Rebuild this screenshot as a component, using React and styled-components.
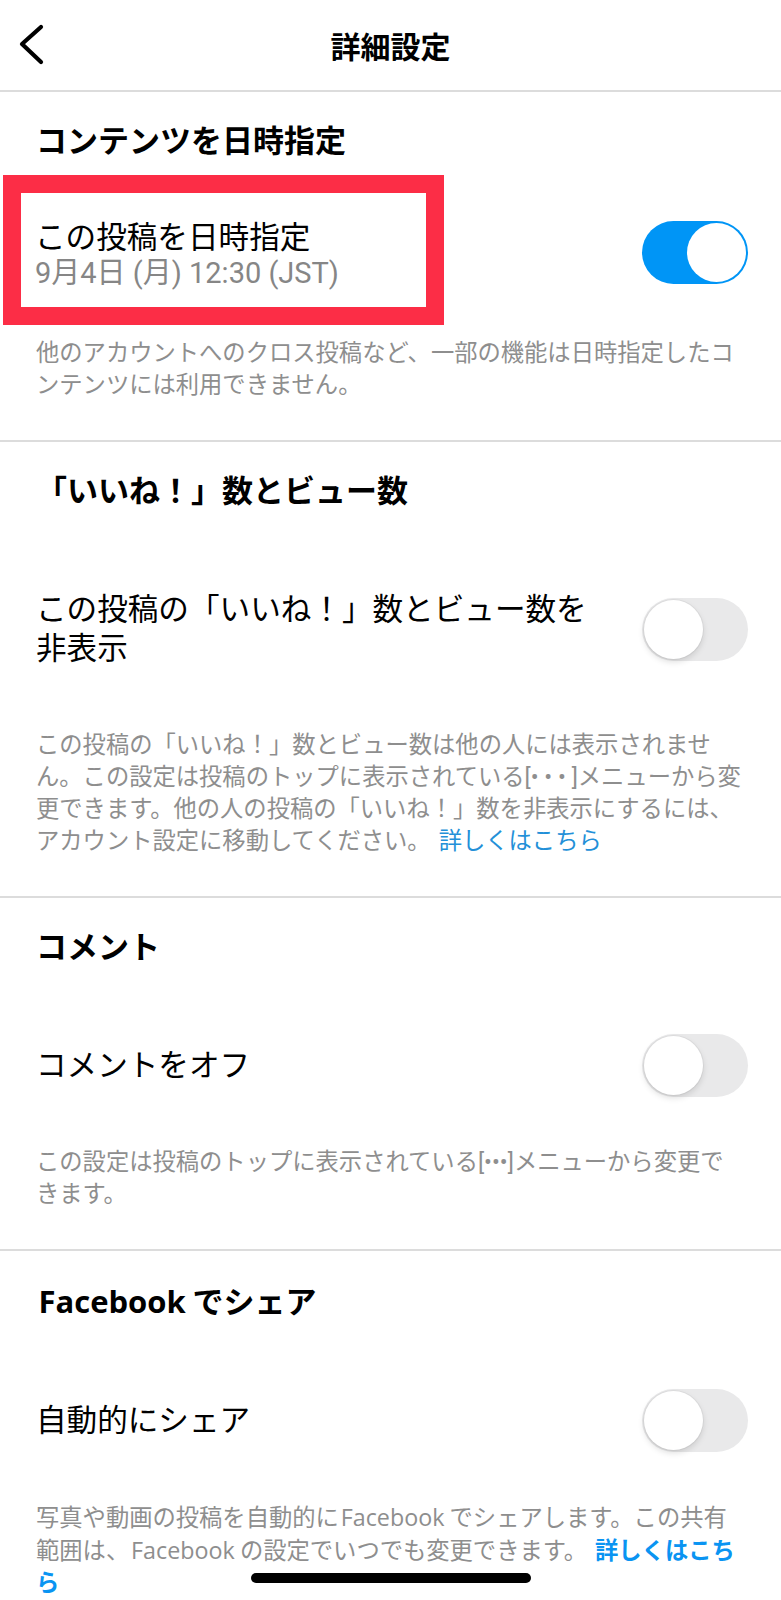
import React from 'react';
import styled, { createGlobalStyle } from 'styled-components';

const GlobalStyle = createGlobalStyle`
  html, body {
    margin: 0;
    background: #fff;
  }
  body {
    font-family: Roboto, "Noto Sans CJK JP", sans-serif;
    color: #000;
    -webkit-font-smoothing: antialiased;
  }
  * {
    box-sizing: border-box;
  }
`;

const Page = styled.div`
  width: 100%;
  min-height: 100vh;
  background: #fff;
`;

const Header = styled.header`
  display: grid;
  grid-template-columns: 90px 1fr 90px;
  align-items: center;
  height: 92px;
  border-bottom: 2px solid #dcdcdc;
`;

const BackButton = styled.button`
  display: flex;
  align-items: center;
  justify-content: flex-start;
  padding: 0 0 0 17px;
  margin: 0;
  border: none;
  background: none;
  height: 100%;
  cursor: pointer;
`;

const Title = styled.h1`
  margin: 0;
  padding-top: 5px;
  text-align: center;
  font-size: 30px;
  font-weight: 700;
  line-height: 40px;
`;

const Section = styled.section`
  padding: 30px 33px 39px 36px;
  border-bottom: ${({ $last }) => ($last ? 'none' : '2px solid #dcdcdc')};
`;

const Heading = styled.h2`
  margin: 0;
  font-size: 31px;
  font-weight: 700;
  line-height: 40px;
`;

const Latin = styled.span`
  font-family: "Open Sans", Roboto, sans-serif;
  margin: 0 0.22em 0 0.08em;
`;

const Row = styled.div`
  display: flex;
  align-items: center;
  justify-content: space-between;
  padding: ${({ $pad }) => $pad || '78px 0 61px'};
`;

const Label = styled.div`
  font-size: 30.6px;
  line-height: 39px;
  font-weight: 400;
  color: #000;
`;

const Highlight = styled.div`
  width: 441px;
  margin-left: -33px;
  padding: 26px 0 18px 14px;
  border: 18px solid #fc2d46;
  ${Label} {
    line-height: 38px;
  }
`;

const SubLabel = styled.div`
  font-size: 29px;
  line-height: 32px;
  color: #868686;
`;

const Track = styled.span`
  position: relative;
  flex: none;
  display: block;
  width: 106px;
  height: 63px;
  margin: ${({ $shift }) => ($shift ? '4px 0 0' : '-12px 0')};
  border-radius: 32px;
  background: ${({ $on }) => ($on ? '#0095f6' : '#e9e9ea')};
`;

const Knob = styled.span`
  position: absolute;
  top: 2px;
  left: ${({ $on }) => ($on ? '45px' : '2px')};
  width: 59px;
  height: 59px;
  border-radius: 50%;
  background: #fff;
  box-shadow: ${({ $on }) =>
    $on ? 'none' : '0 3px 6px rgba(0,0,0,0.13), 0 0 0 1px rgba(0,0,0,0.04)'};
`;

const Note = styled.div`
  font-size: 23.3px;
  line-height: 32px;
  color: #8e8e8e;
`;

const NoteLine = styled.div`
  white-space: nowrap;
`;

const MoreLink = styled.a`
  color: ${({ $strong }) => ($strong ? '#0a94f2' : '#2390d8')};
  font-weight: ${({ $strong }) => ($strong ? 700 : 400)};
  text-decoration: none;
  margin-left: ${({ $gap }) => ($gap ? '8px' : '0')};
`;

const HomeIndicator = styled.div`
  position: fixed;
  left: 50%;
  bottom: 17px;
  width: 280px;
  height: 10px;
  margin-left: -140px;
  border-radius: 5px;
  background: #000;
`;

const Toggle = ({ on, shift }) => (
  <Track $on={on} $shift={shift}>
    <Knob $on={on} />
  </Track>
);

const ChevronLeft = () => (
  <svg width="30" height="42" viewBox="0 0 30 42">
    <path
      d="M24 3 L5 20 L24 38"
      fill="none"
      stroke="#000"
      strokeWidth="4.2"
      strokeLinecap="round"
      strokeLinejoin="round"
    />
  </svg>
);

const App = () => (
  <Page>
    <GlobalStyle />
    <Header>
      <BackButton aria-label="戻る">
        <ChevronLeft />
      </BackButton>
      <Title>詳細設定</Title>
      <span />
    </Header>

    <Section>
      <Heading>コンテンツを日時指定</Heading>
      <Row $pad="13px 0 12px">
        <Highlight>
          <Label>この投稿を日時指定</Label>
          <SubLabel>9月4日 (月) 12:30 (JST)</SubLabel>
        </Highlight>
        <Toggle on shift />
      </Row>
      <Note>
        <NoteLine>他のアカウントへのクロス投稿など、一部の機能は日時指定したコ</NoteLine>
        <NoteLine>ンテンツには利用できません。</NoteLine>
      </Note>
    </Section>

    <Section>
      <Heading>「いいね！」数とビュー数</Heading>
      <Row>
        <Label>
          この投稿の「いいね！」数とビュー数を
          <br />
          非表示
        </Label>
        <Toggle />
      </Row>
      <Note>
        <NoteLine>この投稿の「いいね！」数とビュー数は他の人には表示されませ</NoteLine>
        <NoteLine>ん。この設定は投稿のトップに表示されている[• • • ]メニューから変</NoteLine>
        <NoteLine>更できます。他の人の投稿の「いいね！」数を非表示にするには、</NoteLine>
        <NoteLine>
          アカウント設定に移動してください。
          <MoreLink href="#" $gap>詳しくはこちら</MoreLink>
        </NoteLine>
      </Note>
    </Section>

    <Section>
      <Heading>コメント</Heading>
      <Row>
        <Label>コメントをオフ</Label>
        <Toggle />
      </Row>
      <Note>
        <NoteLine>この設定は投稿のトップに表示されている[•••]メニューから変更で</NoteLine>
        <NoteLine>きます。</NoteLine>
      </Note>
    </Section>

    <Section $last>
      <Heading>
        <Latin>Facebook</Latin>でシェア
      </Heading>
      <Row>
        <Label>自動的にシェア</Label>
        <Toggle />
      </Row>
      <Note>
        <NoteLine>
          写真や動画の投稿を自動的に<Latin>Facebook</Latin>でシェアします。この共有
        </NoteLine>
        <NoteLine>
          範囲は、<Latin>Facebook</Latin>の設定でいつでも変更できます。
          <MoreLink href="#" $strong $gap>詳しくはこち</MoreLink>
        </NoteLine>
        <NoteLine>
          <MoreLink href="#" $strong>ら</MoreLink>
        </NoteLine>
      </Note>
    </Section>

    <HomeIndicator />
  </Page>
);

export default App;
